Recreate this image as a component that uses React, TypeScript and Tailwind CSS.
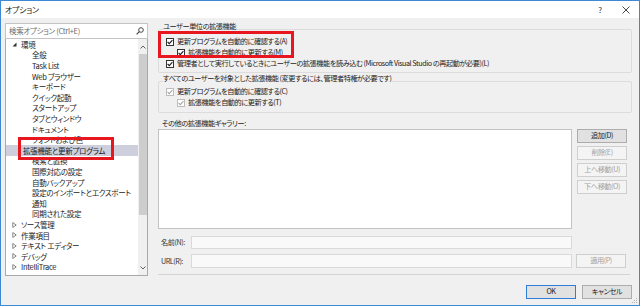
import { ReactNode } from 'react'

const treeChildren = [
  '全般',
  'Task List',
  'Web ブラウザー',
  'キーボード',
  'クイック起動',
  'スタートアップ',
  'タブとウィンドウ',
  'ドキュメント',
  'フォントおよび色',
  '拡張機能と更新プログラム',
  '検索と置換',
  '国際対応の設定',
  '自動バックアップ',
  '設定のインポートとエクスポート',
  '通知',
  '同期された設定',
]

const treeRoots = ['ソース管理', '作業項目', 'テキスト エディター', 'デバッグ', 'IntelliTrace']

function CheckBox({ disabled = false }: { disabled?: boolean }) {
  return (
    <span
      className={`w-[8px] h-[8px] shrink-0 flex items-center justify-center bg-white border ${
        disabled ? 'border-[#bcbcbc]' : 'border-[#333333]'
      }`}
    >
      <svg width="6" height="6" viewBox="0 0 6 6">
        <polyline
          points="0.6,3 2.3,4.7 5.4,1.2"
          fill="none"
          stroke={disabled ? '#a8a8a8' : '#1e1e1e'}
          strokeWidth="1.1"
        />
      </svg>
    </span>
  )
}

function CheckRow({ label, indent = false, disabled = false }: { label: string; indent?: boolean; disabled?: boolean }) {
  return (
    <div className={`h-[11px] flex items-center gap-[3px] ${indent ? 'pl-[18px]' : 'pl-[7px]'}`}>
      <CheckBox disabled={disabled} />
      <span className="whitespace-nowrap leading-[11px]">{label}</span>
    </div>
  )
}

function GroupBox({ label, children, className }: { label: string; children: ReactNode; className: string }) {
  return (
    <div className={`relative border border-[#dcdcdc] rounded-[2px] ${className}`}>
      <span className="absolute left-[4px] top-[-9px] h-[10px] leading-[10px] bg-[#f0f0f0] pr-[1px] whitespace-nowrap">
        {label}
      </span>
      {children}
    </div>
  )
}

function Button({ label, disabled = false, primary = false }: { label: string; disabled?: boolean; primary?: boolean }) {
  return (
    <button
      className={`w-[50px] h-[14px] flex items-center justify-center leading-none border ${
        disabled
          ? 'bg-[#f4f4f4] border-[#cfcfcf] text-[#a3a3a3]'
          : primary
          ? 'bg-[#e1e1e1] border-[#2c7fd6] text-[#1e1e1e]'
          : 'bg-[#e1e1e1] border-[#adadad] text-[#1e1e1e]'
      }`}
    >
      {label}
    </button>
  )
}

function Triangle({ open }: { open: boolean }) {
  return open ? (
    <svg width="5" height="5" viewBox="0 0 5 5">
      <polygon points="4.5,0.5 4.5,4.5 0.5,4.5" fill="#333" />
    </svg>
  ) : (
    <svg width="5" height="6" viewBox="0 0 5 6">
      <polygon points="0.8,0.5 4.2,3 0.8,5.5" fill="none" stroke="#777" strokeWidth="0.9" />
    </svg>
  )
}

export default function App() {
  return (
    <div className="relative w-[640px] h-[306px] border border-[#3c8ad6] bg-[#f0f0f0] flex flex-col text-[7.5px] tracking-[-0.3px] text-[#1b1b1b] font-['Noto_Sans_CJK_JP','Noto_Sans',sans-serif] [font-feature-settings:'palt'] overflow-hidden">
      {/* title bar */}
      <div className="h-[17px] bg-white flex items-center pl-[4px] shrink-0">
        <span className="text-[8px]">オプション</span>
        <span className="ml-auto w-[10px] text-center text-[8px] text-[#333]">?</span>
        <span className="ml-[16px] mr-[8px] w-[10px] flex items-center justify-center">
          <svg width="8" height="8" viewBox="0 0 8 8">
            <path d="M0.5 0.5 L7.5 7.5 M7.5 0.5 L0.5 7.5" stroke="#333" strokeWidth="0.9" />
          </svg>
        </span>
      </div>

      <div className="flex flex-row flex-1">
        {/* left column */}
        <div className="pl-[4px] pt-[5px] w-[147px] flex flex-col shrink-0">
          <div className="h-[16px] bg-white border border-[#c4c4c4] flex items-center pl-[3px] pr-[3px]">
            <span className="text-[#6d6d6d]">検索オプション (Ctrl+E)</span>
            <svg className="ml-auto" width="8" height="8" viewBox="0 0 8 8">
              <circle cx="5" cy="3" r="2.3" fill="none" stroke="#444" strokeWidth="1" />
              <path d="M3.3 4.7 L0.6 7.4" stroke="#444" strokeWidth="1.2" />
            </svg>
          </div>
          <div className="h-[237px] bg-white border border-[#a9a9a9] border-t-0 flex flex-row">
            <div className="flex-1 flex flex-col">
              <div className="h-[10.62px] flex items-center pl-[6px] gap-[4px]">
                <Triangle open />
                <span className="whitespace-nowrap">環境</span>
              </div>
              {treeChildren.map((c) =>
                c === '拡張機能と更新プログラム' ? (
                  <div key={c} className="h-[10.62px] flex items-center pl-[17px] whitespace-nowrap bg-[#cdcfdc]">
                    {c}
                  </div>
                ) : (
                  <div key={c} className="h-[10.62px] flex items-center pl-[26px] whitespace-nowrap">
                    {c}
                  </div>
                )
              )}
              {treeRoots.map((r) => (
                <div key={r} className="h-[10.62px] flex items-center pl-[6px] gap-[4px]">
                  <Triangle open={false} />
                  <span className="whitespace-nowrap">{r}</span>
                </div>
              ))}
            </div>
            {/* scrollbar */}
            <div className="w-[9px] bg-[#f0f0f0] flex flex-col items-center">
              <div className="h-[15px] flex items-center justify-center">
                <svg width="6" height="4" viewBox="0 0 6 4">
                  <polyline points="0.5,3.5 3,1 5.5,3.5" fill="none" stroke="#606060" strokeWidth="1" />
                </svg>
              </div>
              <div className="w-[8px] h-[161px] bg-[#cdcdcd]" />
              <div className="flex-1" />
              <div className="h-[14px] flex items-center justify-center">
                <svg width="6" height="4" viewBox="0 0 6 4">
                  <polyline points="0.5,0.5 3,3 5.5,0.5" fill="none" stroke="#606060" strokeWidth="1" />
                </svg>
              </div>
            </div>
          </div>
        </div>

        {/* right column */}
        <div className="ml-[10px] w-[474px] flex flex-col text-[7.2px] tracking-[-0.45px]">
          <GroupBox label="ユーザー単位の拡張機能" className="mt-[11px] h-[44px] pt-[6px]">
            <CheckRow label="更新プログラムを自動的に確認する(A)" />
            <CheckRow label="拡張機能を自動的に更新する(M)" indent />
            <CheckRow label="管理者として実行しているときにユーザーの拡張機能を読み込む (Microsoft Visual Studio の再起動が必要)(L)" />
          </GroupBox>

          <GroupBox
            label="すべてのユーザーを対象とした拡張機能 (変更するには、管理者特権が必要です)"
            className="mt-[8px] h-[32px] pt-[4px]"
          >
            <CheckRow label="更新プログラムを自動的に確認する(C)" disabled />
            <CheckRow label="拡張機能を自動的に更新する(T)" indent disabled />
          </GroupBox>

          <div className="mt-[5px] h-[10px] leading-[10px] pl-[4px]">その他の拡張機能ギャラリー:</div>

          <div className="mt-[1px] flex flex-row">
            <div className="flex-1 h-[100px] bg-white border border-[#c3c3c3]" />
            <div className="ml-[5px] mr-[5px] flex flex-col gap-[3px]">
              <Button label="追加(D)" />
              <Button label="削除(E)" disabled />
              <Button label="上へ移動(U)" disabled />
              <Button label="下へ移動(O)" disabled />
            </div>
          </div>

          <div className="mt-[7px] h-[13px] flex flex-row items-center">
            <span className="w-[33px] pl-[3px] text-[#333]">名前(N):</span>
            <div className="flex-1 h-[13px] bg-[#f9f9f9] border border-[#d9d9d9]" />
            <div className="w-[60px]" />
          </div>
          <div className="mt-[5px] h-[14px] flex flex-row items-center">
            <span className="w-[33px] pl-[3px] text-[#333]">URL(R):</span>
            <div className="flex-1 h-[14px] bg-[#f9f9f9] border border-[#d9d9d9]" />
            <div className="ml-[4px] mr-[5px] w-[51px] flex">
              <Button label="適用(P)" disabled />
            </div>
          </div>

          <div className="mt-[6px] h-[1px] mr-[2px] bg-[#d2d2d2]" />

          <div className="mt-[10px] flex flex-row justify-end gap-[6px]">
            <Button label="OK" primary />
            <Button label="キャンセル" />
          </div>
        </div>
      </div>

      {/* highlight boxes */}
      <div className="absolute left-[17px] top-[136px] w-[96px] h-[23px] border-[3px] border-[#e8161e]" />
      <div className="absolute left-[157px] top-[30px] w-[136px] h-[27px] border-[3px] border-[#e8161e]" />

      {/* resize grip */}
      <svg className="absolute right-[1px] bottom-[1px]" width="6" height="6" viewBox="0 0 6 6">
        <rect x="4" y="0" width="1" height="1" fill="#b5b5b5" />
        <rect x="2" y="2" width="1" height="1" fill="#b5b5b5" />
        <rect x="4" y="2" width="1" height="1" fill="#b5b5b5" />
        <rect x="0" y="4" width="1" height="1" fill="#b5b5b5" />
        <rect x="2" y="4" width="1" height="1" fill="#b5b5b5" />
        <rect x="4" y="4" width="1" height="1" fill="#b5b5b5" />
      </svg>
    </div>
  )
}
